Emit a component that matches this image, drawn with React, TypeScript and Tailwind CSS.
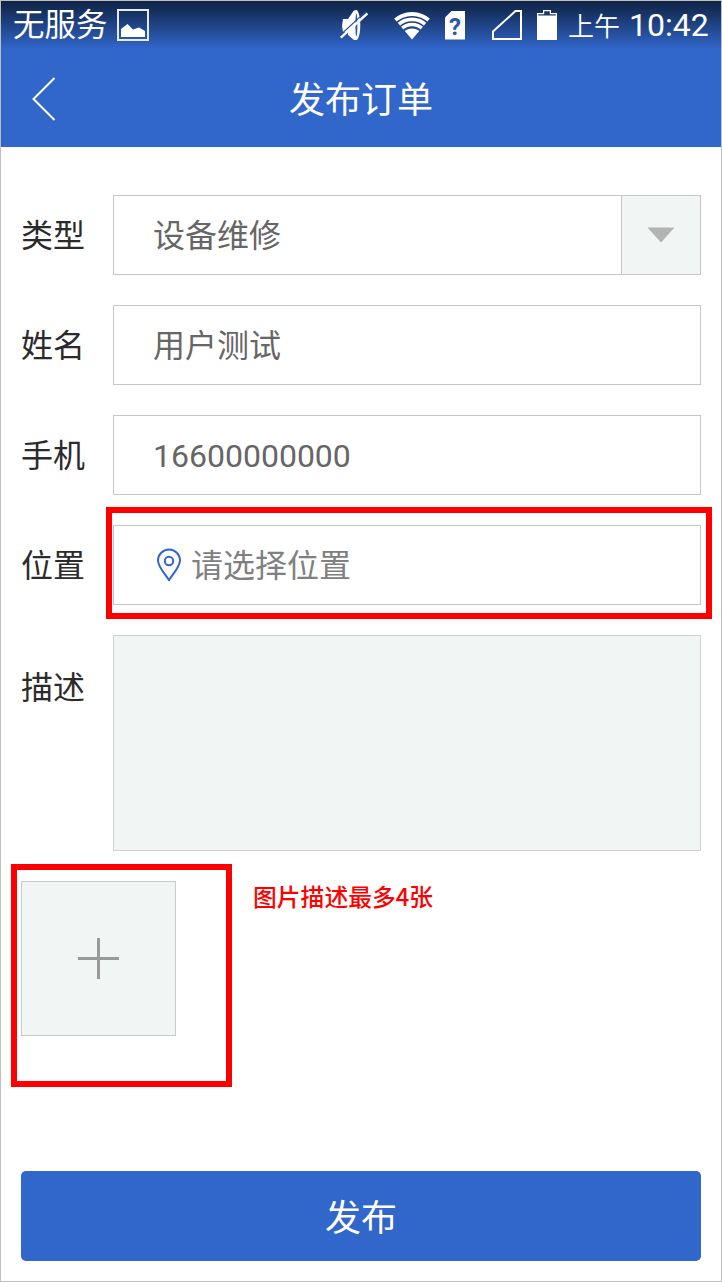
import type { ReactNode } from "react";

function MuteIcon() {
  return (
    <svg width="28" height="30" viewBox="0 0 28 30" className="ml-[191px] shrink-0">
      <path
        d="M3 9 H8 L13.5 1 Q15 0 17 0 Q20.3 4 20.3 15 Q20.3 26 17 30 H14 L8 25 V22 H3 Q1.2 15.5 3 9 Z"
        fill="#fff"
      />
      <ellipse cx="16.4" cy="15" rx="1" ry="11.5" fill="#2a58ae" />
      <path d="M0 25.4 L26 1.4" stroke="#28509c" strokeWidth="1.2" />
      <path d="M0.8 27.6 L27.4 3.4" stroke="#fff" strokeWidth="2.4" />
    </svg>
  );
}

function WifiIcon() {
  return (
    <svg width="38" height="29" viewBox="0 0 38 29" className="ml-[25px] shrink-0">
      <clipPath id="wifi-fan">
        <path d="M19 28.5 L-1 5 V-2 H39 V5 Z" />
      </clipPath>
      <g clipPath="url(#wifi-fan)">
        <g fill="none" stroke="#fff">
          <circle cx="19" cy="28.5" r="25.6" strokeWidth="4" />
          <circle cx="19" cy="28.5" r="20.2" strokeWidth="3.8" />
          <circle cx="19" cy="28.5" r="15" strokeWidth="3.6" />
        </g>
        <circle cx="19" cy="28.5" r="11" fill="#fff" />
      </g>
    </svg>
  );
}

function SimIcon() {
  return (
    <span className="ml-[14px] flex h-[29px] w-5 shrink-0 items-center justify-center bg-white pt-[3px] font-[Roboto,sans-serif] text-[24px] font-bold leading-[26px] text-[#2a56ab] [clip-path:polygon(7px_0,100%_0,100%_100%,0_100%,0_7px)]">
      ?
    </span>
  );
}

function SignalIcon() {
  return (
    <svg width="30" height="30" viewBox="0 0 30 30" className="ml-[27px] shrink-0">
      <path d="M1 29 V21.5 L23.5 1 H29 V29 Z" fill="none" stroke="#fff" strokeWidth="2" />
    </svg>
  );
}

function BatteryIcon() {
  return (
    <svg width="20" height="30" viewBox="0 0 20 30" className="ml-[15px] shrink-0">
      <path d="M0 3 H6 V0 H14 V3 H20 V30 H0 Z" fill="#fff" />
      <path d="M1.2 4.2 H7.2 V1.2 H12.8 V4.2 H18.8 V5.6 H1.2 Z" fill="#1c3768" />
    </svg>
  );
}

function StatusBar() {
  return (
    <div className="flex h-[48px] items-center bg-linear-to-b from-[#0f2345] to-[#3166cb] pl-[12px] text-white">
      <span className="w-[96px] shrink-0 pb-[6px] text-[31.5px] leading-[42px]">无服务</span>
      <svg width="32" height="32" viewBox="0 0 32 32" className="ml-[8px] shrink-0">
        <rect x="1" y="1" width="30" height="30" fill="none" stroke="#e6ebf5" strokeWidth="2" />
        <path d="M4 28 V20 L10.5 15 L16 20.5 L22 18.5 L28 22 V28 Z" fill="#fff" />
      </svg>
      <MuteIcon />
      <WifiIcon />
      <SimIcon />
      <SignalIcon />
      <BatteryIcon />
      <span className="ml-[11px] shrink-0 text-[26px] font-[350] leading-[48px]">上午</span>
      <span className="ml-[9px] shrink-0 font-[Roboto,sans-serif] text-[32px] leading-[48px]">10:42</span>
    </div>
  );
}

function Header() {
  return (
    <div className="flex h-[98px] items-center bg-[#3166cb] text-white">
      <svg width="24" height="44" viewBox="0 0 24 44" className="mt-[2px] ml-[31px] shrink-0">
        <path d="M22.5 1 L1.5 22 L22.5 43" fill="none" stroke="#fff" strokeWidth="2" />
      </svg>
      <h1 className="grow pr-[55px] pb-[2px] text-center text-[36px] leading-[50px]">发布订单</h1>
    </div>
  );
}

function Row({ label, children }: { label: string; children: ReactNode }) {
  return (
    <div className="flex h-20 items-center">
      <span className="w-[92px] shrink-0 pb-[4px] text-[32px] text-[#2b2b2b]">{label}</span>
      {children}
    </div>
  );
}

const field = "flex h-20 grow items-center border border-[#c6c6c6] text-[32px] text-[#666]";

export default function App() {
  return (
    <div className="h-[1282px] w-[722px] overflow-hidden border border-[#bfbfbf] bg-white font-['Noto_Sans_CJK_SC',sans-serif]">
      <StatusBar />
      <Header />
      <div className="flex flex-col gap-[30px] pt-[48px] pr-5 pl-5">
        <Row label="类型">
          <div className={field}>
            <span className="grow pb-[4px] pl-[39px]">设备维修</span>
            <span className="flex h-full w-[79px] items-center justify-center border-l border-[#c6c6c6] bg-[#f1f5f4]">
              <svg width="28" height="16" viewBox="0 0 28 16">
                <path d="M0.5 0.5 H27.5 L14 15.5 Z" fill="#b3b3b3" />
              </svg>
            </span>
          </div>
        </Row>
        <Row label="姓名">
          <div className={field}>
            <span className="pb-[4px] pl-[39px]">用户测试</span>
          </div>
        </Row>
        <Row label="手机">
          <div className={field}>
            <span className="pt-[2px] pl-[39px] font-[Roboto,sans-serif]">16600000000</span>
          </div>
        </Row>
        <div className="relative">
          <Row label="位置">
            <div className={field}>
              <svg width="26" height="34" viewBox="0 0 26 34" className="ml-[42px] shrink-0">
                <path
                  d="M13 32.2 C10 27 2 19 2 12.5 A11 11 0 0 1 24 12.5 C24 19 16 27 13 32.2 Z"
                  fill="none"
                  stroke="#3166cb"
                  strokeWidth="2"
                  strokeLinejoin="round"
                />
                <circle cx="13" cy="13" r="4.2" fill="none" stroke="#3166cb" strokeWidth="2" />
              </svg>
              <span className="ml-[9px] pb-[5px] text-[#808080]">请选择位置</span>
            </div>
          </Row>
          <div className="absolute -top-[18px] left-[85px] h-[112px] w-[606px] border-[6px] border-[#f00]" />
        </div>
        <div className="flex">
          <span className="w-[92px] shrink-0 pt-[26px] text-[32px] leading-[48px] text-[#2b2b2b]">描述</span>
          <div className="h-[216px] grow border border-[#cfd1d0] bg-[#f1f5f4]" />
        </div>
        <div className="relative flex h-[155px]">
          <div className="flex size-[155px] items-center justify-center border border-[#c9cbca] bg-[#f1f5f4]">
            <svg width="41" height="41" viewBox="0 0 41 41">
              <path d="M0 20.5 H41 M20.5 0 V41" stroke="#999" strokeWidth="3" />
            </svg>
          </div>
          <div className="absolute -top-[17px] -left-[10px] h-[223px] w-[221px] border-[6px] border-[#f00]" />
          <span className="ml-[77px] text-[23.8px] font-medium leading-[30px] text-[#f00]">图片描述最多4张</span>
        </div>
      </div>
      <button className="mx-5 mt-[135px] flex h-[90px] w-[680px] items-center justify-center rounded-[5px] bg-[#3166cb] pb-[3px] text-[36px] text-white">
        发布
      </button>
    </div>
  );
}
